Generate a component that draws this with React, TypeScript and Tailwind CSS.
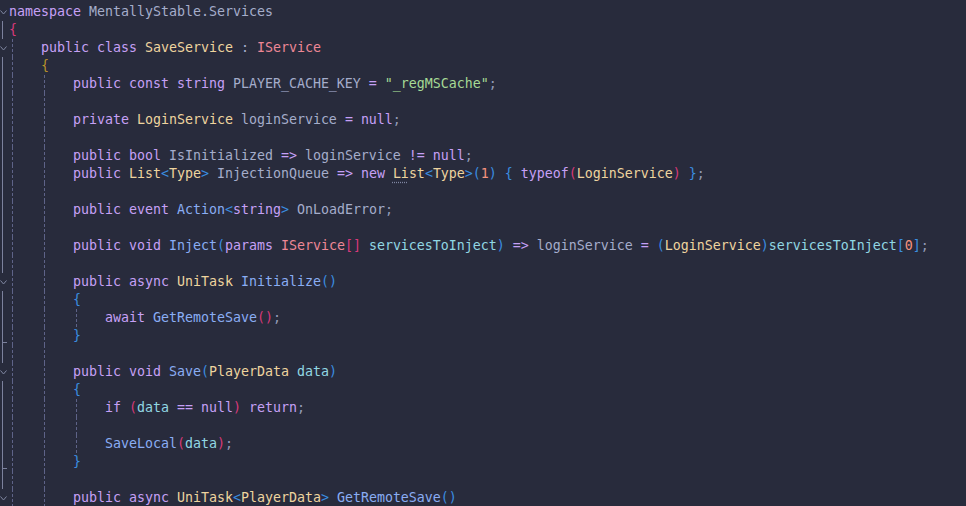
import React from "react"

const K = "text-[#c6a0f6]"
const TY = "text-[#eed49f]"
const IF = "text-[#ed8796]"
const M = "text-[#8aadf4]"
const P = "text-[#91d7e3]"
const V = "text-[#a5adcb]"
const N = "text-[#f5937f]"
const S = "text-[#a6da95]"
const X = "text-[#939ab7]"
const B1 = "text-[#d8397a]"
const B2 = "text-[#b8922a]"
const B3 = "text-[#3b8ee0]"

type Tok = [string, string]
type Line = { indent: number; depth: number; fold?: "open" | "end"; toks: Tok[] }

const lines: Line[] = [
  { indent: 0, depth: 0, fold: "open", toks: [[K, "namespace"], [V, " MentallyStable.Services"]] },
  { indent: 0, depth: 0, toks: [[B1, "{"]] },
  { indent: 1, depth: 1, fold: "open", toks: [[K, "public class "], [TY, "SaveService"], [V, " : "], [IF, "IService"]] },
  { indent: 1, depth: 1, toks: [[B2, "{"]] },
  { indent: 2, depth: 2, toks: [[K, "public const string "], [V, "PLAYER_CACHE_KEY "], [K, "="], [V, " "], [S, "\"_regMSCache\""], [X, ";"]] },
  { indent: 2, depth: 2, toks: [] },
  { indent: 2, depth: 2, toks: [[K, "private "], [TY, "LoginService"], [V, " loginService "], [K, "="], [V, " "], [K, "null"], [X, ";"]] },
  { indent: 2, depth: 2, toks: [] },
  { indent: 2, depth: 2, toks: [[K, "public bool "], [V, "IsInitialized "], [K, "=>"], [V, " loginService "], [K, "!="], [V, " "], [K, "null"], [X, ";"]] },
  {
    indent: 2, depth: 2, toks: [
      [K, "public "], [TY, "List"], [B3, "<"], [TY, "Type"], [B3, ">"], [V, " InjectionQueue "], [K, "=>"], [V, " "], [K, "new "],
      ["dots", "Li"], [TY, "st"], [B3, "<"], [TY, "Type"], [B3, ">("], [N, "1"], [B3, ")"], [V, " "], [B3, "{"], [V, " "], [K, "typeof"],
      [B1, "("], [TY, "LoginService"], [B1, ")"], [V, " "], [B3, "}"], [X, ";"],
    ],
  },
  { indent: 2, depth: 2, toks: [] },
  { indent: 2, depth: 2, toks: [[K, "public event "], [M, "Action"], [B3, "<"], [K, "string"], [B3, ">"], [V, " OnLoadError"], [X, ";"]] },
  { indent: 2, depth: 2, toks: [] },
  {
    indent: 2, depth: 2, toks: [
      [K, "public void "], [M, "Inject"], [B3, "("], [K, "params "], [IF, "IService"], [B1, "[]"], [V, " "], [P, "servicesToInject"], [B3, ")"],
      [V, " "], [K, "=>"], [V, " loginService "], [K, "="], [V, " "], [B3, "("], [TY, "LoginService"], [B3, ")"], [P, "servicesToInject"],
      [B3, "["], [N, "0"], [B3, "]"], [X, ";"],
    ],
  },
  { indent: 2, depth: 2, toks: [] },
  { indent: 2, depth: 2, fold: "open", toks: [[K, "public async "], [TY, "UniTask"], [V, " "], [M, "Initialize"], [B3, "()"]] },
  { indent: 2, depth: 2, toks: [[B3, "{"]] },
  { indent: 3, depth: 3, toks: [[K, "await "], [M, "GetRemoteSave"], [B1, "()"], [X, ";"]] },
  { indent: 2, depth: 2, fold: "end", toks: [[B3, "}"]] },
  { indent: 2, depth: 2, toks: [] },
  { indent: 2, depth: 2, fold: "open", toks: [[K, "public void "], [M, "Save"], [B3, "("], [TY, "PlayerData"], [V, " "], [P, "data"], [B3, ")"]] },
  { indent: 2, depth: 2, toks: [[B3, "{"]] },
  { indent: 3, depth: 3, toks: [[K, "if "], [B1, "("], [P, "data"], [V, " "], [K, "=="], [V, " "], [K, "null"], [B1, ")"], [V, " "], [K, "return"], [X, ";"]] },
  { indent: 3, depth: 3, toks: [] },
  { indent: 3, depth: 3, toks: [[M, "SaveLocal"], [B1, "("], [P, "data"], [B1, ")"], [X, ";"]] },
  { indent: 2, depth: 2, fold: "end", toks: [[B3, "}"]] },
  { indent: 2, depth: 2, toks: [] },
  { indent: 2, depth: 2, fold: "open", toks: [[K, "public async "], [TY, "UniTask"], [B3, "<"], [TY, "PlayerData"], [B3, ">"], [V, " "], [M, "GetRemoteSave"], [B3, "()"]] },
  { indent: 2, depth: 2, toks: [[B3, "{"]] },
]

const Gutter = ({ fold, first }: { fold?: "open" | "end"; first: boolean }) => {
  if (fold === "open") {
    return (
      <div className="w-[9px] h-full flex items-center shrink-0">
        <svg width="8" height="5" viewBox="0 0 8 5">
          <polyline points="0.5,0.5 3.5,4 6.5,0.5" fill="none" stroke="#8087a2" strokeWidth="1" />
        </svg>
      </div>
    )
  }
  return (
    <div className="w-[9px] h-full flex shrink-0">
      {!first && (
        <div className="ml-[2px] w-px h-full bg-[#7c819d] flex flex-col justify-end">
          {fold === "end" && <div className="w-[5px] h-px bg-[#7c819d] mb-[2px]" />}
        </div>
      )}
    </div>
  )
}

const Guide = () => (
  <span className="inline-block w-[32px] h-full shrink-0">
    <span className="block ml-[3px] h-full border-l border-dashed border-[#5e6388]" />
  </span>
)

const CodeLine = ({ line, first }: { line: Line; first: boolean }) => {
  const cells = []
  const n = line.toks.length === 0 ? line.depth : line.indent
  for (let k = 0; k < n; k++) {
    cells.push(k < line.depth ? <Guide key={k} /> : <span key={k} className="inline-block w-[32px] h-full shrink-0" />)
  }
  return (
    <div className="flex h-[18px] items-stretch">
      <Gutter fold={line.fold} first={first} />
      <div className="flex h-full">{cells}</div>
      <div className="whitespace-pre leading-[18px]">
        {line.toks.map(([c, t], i) =>
          c === "dots" ? (
            <span key={i} className="text-[#eed49f] underline decoration-dotted decoration-[#8087a2] underline-offset-[4px]">{t}</span>
          ) : (
            <span key={i} className={c}>{t}</span>
          )
        )}
      </div>
    </div>
  )
}

export default function App() {
  return (
    <div className="w-[966px] h-[506px] overflow-hidden bg-[#282b3c] pt-[3px] font-['DejaVu_Sans_Mono',monospace] text-[13.29px]">
      {lines.map((l, i) => (
        <CodeLine key={i} line={l} first={i === 0} />
      ))}
    </div>
  )
}
